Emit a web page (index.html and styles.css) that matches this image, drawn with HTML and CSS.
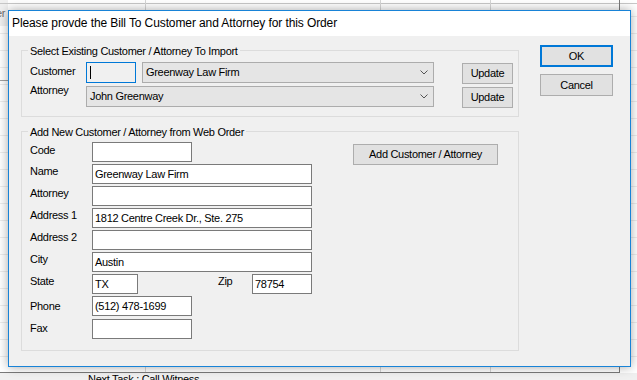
FILE: index.html
```html
<!DOCTYPE html>
<html lang="en">
<head>
    <meta charset="UTF-8">
    <title>Bill To Customer and Attorney</title>
    <link rel="stylesheet" href="styles.css">
</head>
<body>
    <!-- window behind the dialog -->
    <div class="backdrop">
        <div class="back-tab">er</div>
        <div class="back-line back-line-top"></div>
        <div class="back-line back-line-left"></div>
        <div class="back-col" style="left: 145px;"></div>
        <div class="back-col" style="left: 380px;"></div>
        <div class="back-col" style="left: 490px;"></div>
        <div class="back-frame"></div>
        <div class="back-status">Next Task : Call Witness</div>
    </div>

    <div class="dialog">
        <div class="titlebar">Please provde the Bill To Customer and Attorney for this Order</div>
        <div class="dialog-body">
            <div class="groups">
                <fieldset class="group group-import">
                    <legend>Select Existing Customer / Attorney To Import</legend>
                    <div class="import-grid">
                        <span class="label label-customer">Customer</span>
                        <div class="textbox textbox-focus"><span class="caret"></span></div>
                        <div class="combo">
                            <span>Greenway Law Firm</span>
                            <svg class="chevron" width="8" height="5" viewBox="0 0 8 5"><polyline points="0.5,0.5 4,4 7.5,0.5" fill="none" stroke="#555" stroke-width="1"/></svg>
                        </div>
                        <button class="button button-update">Update</button>

                        <span class="label label-attorney">Attorney</span>
                        <div class="combo combo-wide">
                            <span>John Greenway</span>
                            <svg class="chevron" width="8" height="5" viewBox="0 0 8 5"><polyline points="0.5,0.5 4,4 7.5,0.5" fill="none" stroke="#555" stroke-width="1"/></svg>
                        </div>
                        <button class="button button-update">Update</button>
                    </div>
                </fieldset>

                <fieldset class="group group-new">
                    <legend>Add New Customer / Attorney from Web Order</legend>
                    <div class="new-layout">
                        <div class="form-grid">
                            <span class="label label-code">Code</span>
                            <div class="textbox textbox-short"></div>

                            <span class="label">Name</span>
                            <div class="textbox">Greenway Law Firm</div>

                            <span class="label">Attorney</span>
                            <div class="textbox"></div>

                            <span class="label">Address 1</span>
                            <div class="textbox">1812 Centre Creek Dr., Ste. 275</div>

                            <span class="label">Address 2</span>
                            <div class="textbox"></div>

                            <span class="label">City</span>
                            <div class="textbox">Austin</div>

                            <span class="label">State</span>
                            <div class="state-row">
                                <div class="textbox textbox-state">TX</div>
                                <span class="label label-zip">Zip</span>
                                <div class="textbox textbox-zip">78754</div>
                            </div>

                            <span class="label label-low">Phone</span>
                            <div class="textbox textbox-short">(512) 478-1699</div>

                            <span class="label label-low">Fax</span>
                            <div class="textbox textbox-short textbox-last"></div>
                        </div>
                        <button class="button button-add">Add Customer / Attorney</button>
                    </div>
                </fieldset>
            </div>

            <div class="actions">
                <button class="button button-ok">OK</button>
                <button class="button">Cancel</button>
            </div>
        </div>
    </div>
</body>
</html>
```

FILE: styles.css
```css
body {
    margin: 0;
    padding: 10px 0 0 8px;
    width: 637px;
    height: 380px;
    box-sizing: border-box;
    overflow: hidden;
    position: relative;
    background-color: #ffffff;
    font-family: "Liberation Sans", Arial, sans-serif;
    font-size: 11px;
    letter-spacing: -0.3px;
    color: #000000;
}

/* background application */
.backdrop {
    position: absolute;
    top: 0;
    left: 0;
    width: 637px;
    height: 380px;
    background-color: #ffffff;
    background-image: repeating-linear-gradient(to bottom, transparent 0, transparent 16px, #ececec 16px, #ececec 17px);
}
.back-tab {
    position: absolute;
    left: 0;
    top: 0;
    width: 8px;
    height: 26px;
    background-color: #f0f0f0;
    color: #6d6d6d;
    font-size: 11px;
    line-height: 26px;
    text-indent: -4px;
    overflow: hidden;
}
.back-line {
    position: absolute;
    background-color: #a0a0a0;
    height: 1px;
}
.back-line-top {
    left: 0;
    top: 3px;
    width: 637px;
    background-color: #c8c8c8;
}
.back-line-left {
    left: 0;
    top: 80px;
    width: 8px;
}
.back-col {
    position: absolute;
    top: 0;
    width: 1px;
    height: 380px;
    background-color: #d6d6d6;
}
.back-frame {
    position: absolute;
    left: 0;
    top: 0;
    width: 619px;
    height: 372px;
    border-right: 1px solid #7a7a7a;
    border-bottom: 1px solid #7a7a7a;
}
.back-status {
    position: absolute;
    left: 0;
    top: 373px;
    width: 637px;
    height: 7px;
    background-color: #f0f0f0;
    padding-left: 88px;
    box-sizing: border-box;
    line-height: 13px;
    overflow: hidden;
}

/* dialog */
.dialog {
    position: relative;
    width: 623px;
    height: 357px;
    box-sizing: border-box;
    border: 1px solid #1883d7;
    background-color: #f0f0f0;
    box-shadow: 0 0 10px rgba(0, 0, 0, 0.35);
}
.titlebar {
    height: 25px;
    background-color: #ffffff;
    padding-left: 3px;
    font-family: "Segoe UI", "Liberation Sans", Arial, sans-serif;
    font-size: 12px;
    letter-spacing: -0.1px;
    line-height: 24px;
    white-space: nowrap;
}
.dialog-body {
    display: flex;
    align-items: flex-start;
    padding: 7px 0 0 12px;
}
.groups {
    display: flex;
    flex-direction: column;
    gap: 7px;
}

.group {
    margin: 0;
    width: 498px;
    min-width: 0;
    box-sizing: border-box;
    border: 1px solid #dcdcdc;
}
.group legend {
    padding: 2px 2px 0 2px;
    margin-left: -2px;
    line-height: 12px;
    height: 14px;
    box-sizing: border-box;
}
.group-import {
    padding: 5px 5px 9px 8px;
}
.group-new {
    padding: 4px 5px 12px 8px;
}

.label {
    line-height: 13px;
    white-space: nowrap;
}

.import-grid {
    display: grid;
    grid-template-columns: 50px 50px 292px 1fr;
    grid-template-rows: 21px 21px;
    column-gap: 6px;
    row-gap: 3px;
}
.label-customer {
    padding-top: 3px;
}
.label-attorney {
    margin-top: -2px;
}

.textbox {
    height: 20px;
    box-sizing: border-box;
    border: 1px solid #7a7a7a;
    background-color: #ffffff;
    padding-left: 2px;
    line-height: 18px;
    white-space: nowrap;
    overflow: hidden;
}
.textbox-focus {
    height: 21px;
    border-color: #0078d7;
    background-color: #f0f0f0;
    position: relative;
}
.caret {
    display: block;
    width: 1px;
    height: 13px;
    margin-top: 3px;
    margin-left: 1px;
    background-color: #000000;
}

.combo {
    display: flex;
    align-items: center;
    justify-content: space-between;
    box-sizing: border-box;
    border: 1px solid #acacac;
    background-color: #e5e5e5;
    padding: 0 5px 0 3px;
    line-height: 19px;
}
.combo-wide {
    grid-column: 2 / 4;
}
.chevron {
    display: block;
}

.button {
    font-family: "Liberation Sans", Arial, sans-serif;
    font-size: 11px;
    letter-spacing: -0.3px;
    color: #000000;
    background-color: #e1e1e1;
    border: 1px solid #adadad;
    border-radius: 0;
    padding: 0;
    margin: 0;
    height: 21px;
    box-sizing: border-box;
    line-height: 19px;
}
.button-update {
    width: 51px;
    justify-self: end;
    margin-top: 1px;
}

.new-layout {
    display: flex;
    align-items: flex-start;
}
.form-grid {
    display: grid;
    grid-template-columns: 62px 220px;
    grid-auto-rows: 20px;
    row-gap: 2px;
}
.form-grid .label {
    padding-top: 1px;
}
.form-grid .label-code {
    padding-top: 2px;
}
.form-grid .label-low {
    padding-top: 4px;
}
.textbox-short {
    width: 100px;
}
.textbox-last {
    margin-top: 1px;
}
.state-row {
    display: flex;
}
.textbox-state {
    width: 46px;
}
.form-grid .label-zip {
    margin-left: 80px;
    width: 34px;
}
.textbox-zip {
    width: 60px;
}
.button-add {
    width: 145px;
    margin-left: 41px;
    margin-top: 2px;
}

.actions {
    display: flex;
    flex-direction: column;
    gap: 7px;
    margin-left: 21px;
    margin-top: 2px;
}
.actions .button {
    width: 73px;
    height: 22px;
    line-height: 20px;
}
.actions .button-ok {
    border: 2px solid #0078d7;
    line-height: 18px;
}
```
